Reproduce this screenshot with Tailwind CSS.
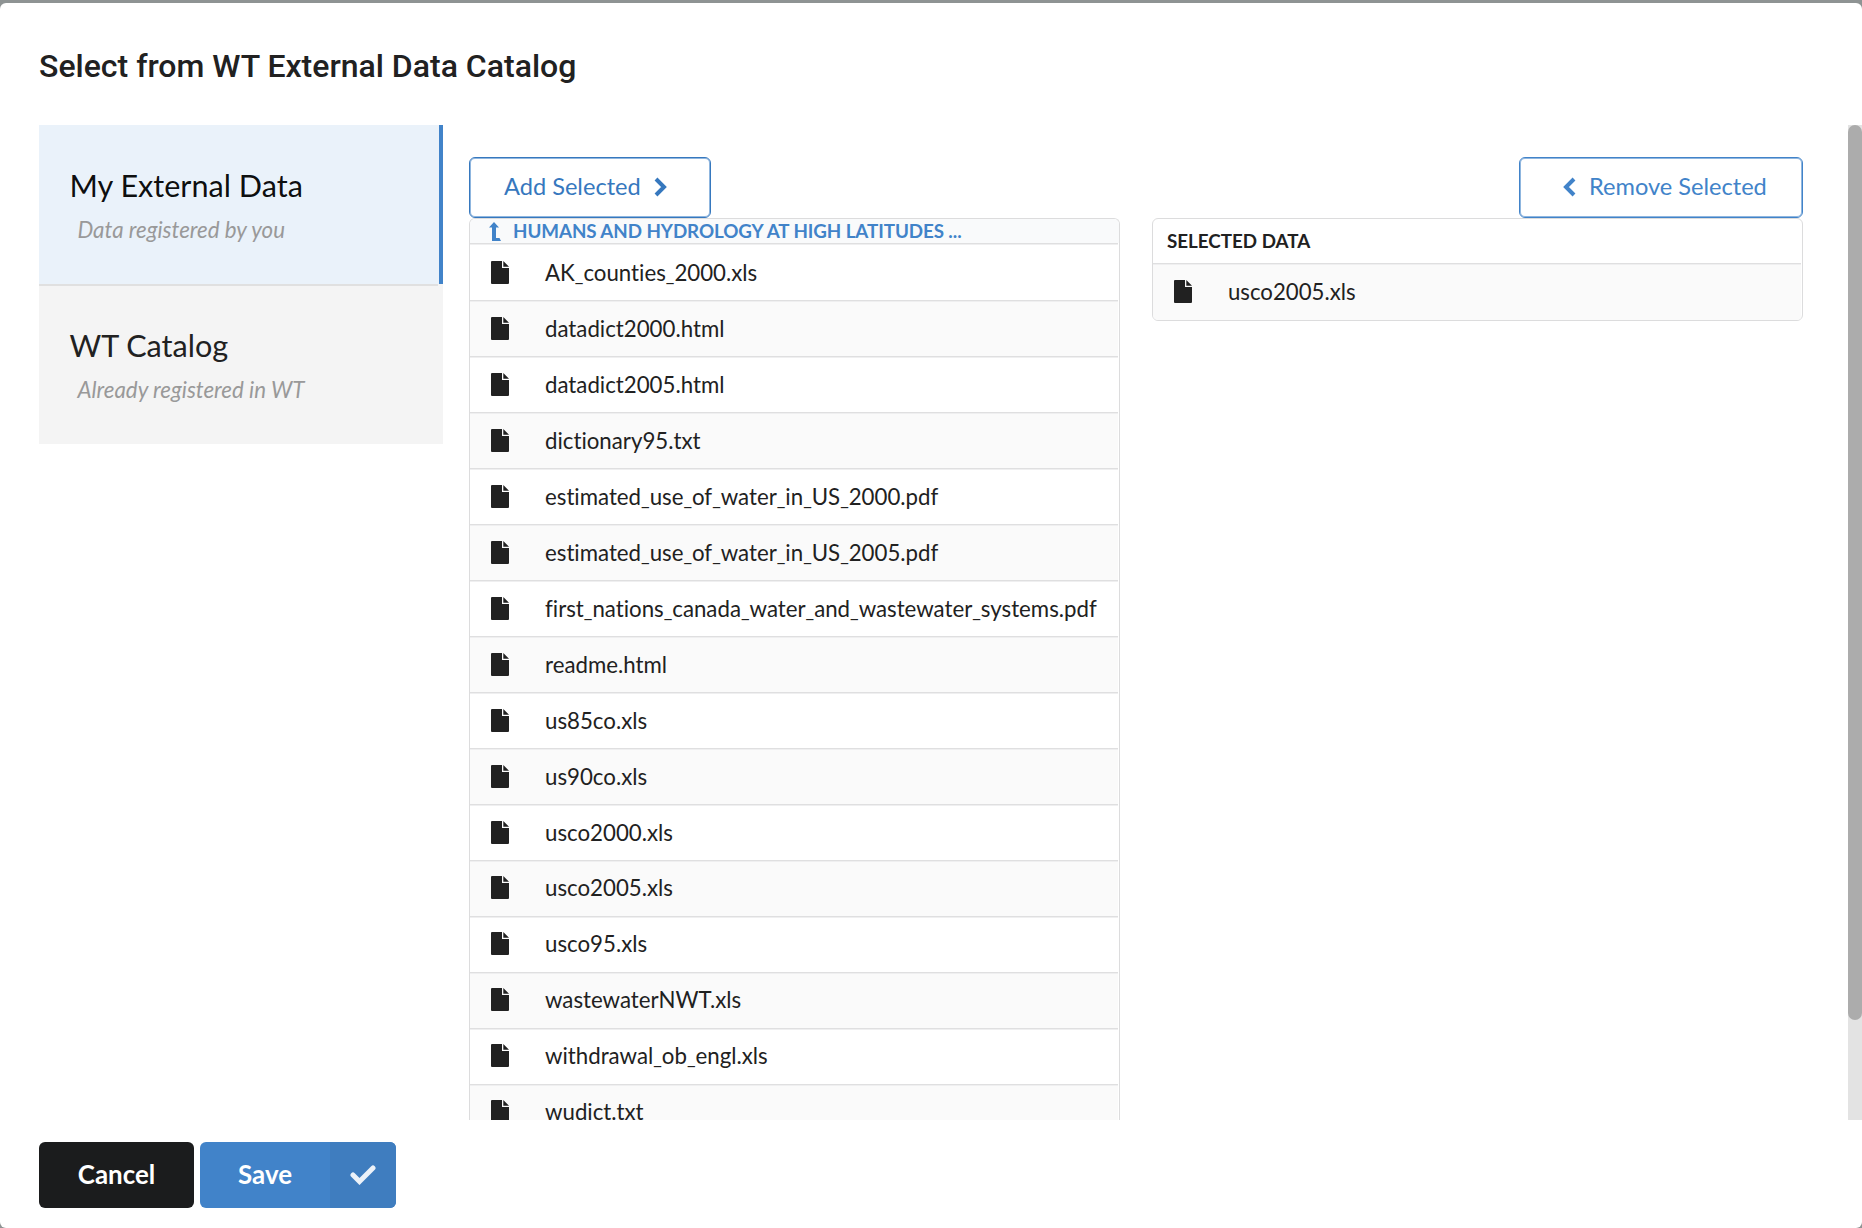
<!DOCTYPE html>
<html lang="en">
<head>
<meta charset="utf-8">
<title>Select from WT External Data Catalog</title>
<script src="https://cdn.jsdelivr.net/npm/@tailwindcss/browser@4"></script>
</head>
<body class="h-[1228px] w-[1862px] overflow-hidden bg-[#8e9393] pt-[3px] font-['Lato',sans-serif] text-[#212121] [font-variant-ligatures:none]">
<svg class="hidden">
  <symbol id="file" viewBox="0 0 18 23"><path fill="currentColor" d="M1 0h10v7h7v15a1 1 0 0 1-1 1H1a1 1 0 0 1-1-1V1a1 1 0 0 1 1-1zM12.3 0 18 5.700H12.300z"/></symbol>
</svg>
<div class="flex h-[1225px] flex-col rounded-[6px] bg-white">
  <header class="flex h-[122px] shrink-0 items-center pt-[3px] pl-[39px]">
    <h1 class="whitespace-nowrap font-['Roboto',sans-serif] text-[32px] font-medium leading-none">Select from WT External Data Catalog</h1>
  </header>
  <main class="flex h-[995px] shrink-0 overflow-hidden pl-[39px]">
    <nav class="mr-[26px] w-[404px] shrink-0">
      <a class="flex h-[159px] flex-col border-r-4 border-[#4183c9] bg-[#eaf2fa] pt-[42px] pl-[30.500px]">
        <span class="text-[30.600px] leading-[38px] text-black/95">My External Data</span>
        <span class="mt-[8px] pl-[8px] text-[22.300px] italic leading-[34px] text-[#999]">Data registered by you</span>
      </a>
      <a class="flex h-[160px] flex-col bg-[#f4f4f4]">
        <span class="mr-[5px] h-[2px] bg-[#e0e0e0]"></span>
        <span class="mt-[41px] pl-[30.500px] text-[30.600px] leading-[38px]">WT Catalog</span>
        <span class="mt-[8px] pl-[38.500px] text-[22.300px] italic leading-[34px] text-[#999]">Already registered in WT</span>
      </a>
    </nav>
    <section class="flex w-[651px] shrink-0 flex-col items-start pt-[32px]">
      <button class="flex h-[61px] w-[242px] shrink-0 items-center rounded-[6px] border border-[#3678be] pl-[34px] pb-[2px] text-[23.600px] text-[#3678be] shadow-[inset_0_0_0_1px_#8fb6df]">Add Selected
        <svg class="ml-[13px] h-[20px] w-[13px]" viewBox="0 0 13 20"><path d="M2 2l8 8-8 8" fill="none" stroke="currentColor" stroke-width="4"/></svg>
      </button>
      <div class="w-full rounded-t-[6px] border border-b-0 border-[#dcdcdd]">
        <div class="flex h-[24px] items-center rounded-t-[5px] bg-[#f9fafb] pl-[19px] text-[18.800px] font-bold leading-none tracking-[-0.08px] text-[#4183c9]">
          <svg class="mr-[12px] h-[19px] w-[12px]" viewBox="0 0 12 19"><path d="M5 0l5 5.500H7V16H10.500L12 19H3V5.500H0z" fill="currentColor"/></svg>HUMANS AND HYDROLOGY AT HIGH LATITUDES ...
        </div>
        <div id="rows"></div>
      </div>
    </section>
    <section class="ml-[32px] flex w-[651px] shrink-0 flex-col items-end pt-[32px]">
      <button class="flex h-[61px] w-[284px] shrink-0 items-center rounded-[6px] border border-[#4183c9] pl-[43px] pb-[2px] text-[23.600px] text-[#4183c9] shadow-[inset_0_0_0_1px_#8fb6df]">
        <svg class="mr-[13px] h-[20px] w-[13px]" viewBox="0 0 13 20"><path d="M11 2l-8 8 8 8" fill="none" stroke="currentColor" stroke-width="4"/></svg>Remove Selected
      </button>
      <div class="w-full overflow-hidden rounded-[6px] border border-[#dcdcdd]">
        <div class="flex h-[44px] items-center pl-[14px] text-[18.800px] font-bold leading-none">SELECTED DATA</div>
        <div class="mr-px flex h-[57px] items-center border-t border-[#dfdfe0] bg-[#fafafa] pb-px pl-[21px] text-[22.200px] leading-none shadow-[inset_0_1px_0_#efeff0]">
          <svg class="mr-[36px] h-[23px] w-[18px]"><use href="#file"/></svg><span class="mt-[2px]">usco2005.xls</span>
        </div>
      </div>
    </section>
    <div class="ml-auto w-[14px] bg-[#e3e3e3]"><div class="h-[895px] rounded-full bg-[#acacac]"></div></div>
  </main>
  <footer class="flex items-start gap-[6px] pt-[22px] pl-[39px] text-[25.900px] font-bold leading-none text-white">
    <button class="flex h-[66px] w-[155px] items-center justify-center rounded-[6px] bg-[#1b1c1d]">Cancel</button>
    <button class="flex h-[66px] w-[196px] items-center overflow-hidden rounded-[6px] bg-[#4183c9]">
      <span class="flex w-[130px] justify-center">Save</span>
      <span class="flex h-full w-[66px] items-center justify-center bg-[#3f7dbf] text-[#ecf2f9]"><svg class="h-[20px] w-[26px]" viewBox="0 0 26 20"><path d="M3 10l6.500 6.500L23 3" fill="none" stroke="currentColor" stroke-width="5" stroke-linecap="round"/></svg></span>
    </button>
  </footer>
</div>
<script>
const files = ["AK_counties_2000.xls","datadict2000.html","datadict2005.html","dictionary95.txt","estimated_use_of_water_in_US_2000.pdf","estimated_use_of_water_in_US_2005.pdf","first_nations_canada_water_and_wastewater_systems.pdf","readme.html","us85co.xls","us90co.xls","usco2000.xls","usco2005.xls","usco95.xls","wastewaterNWT.xls","withdrawal_ob_engl.xls","wudict.txt"];
document.getElementById("rows").innerHTML = files.map((f, i) => `<div class="mr-px flex ${i ? "h-[56px]" : "h-[57px]"} items-center border-t border-[#dfdfe0] ${i % 2 ? "bg-[#fafafa]" : "bg-white"} ${i > 10 ? "pb-[2px]" : i ? "pb-px" : "pt-px"} pl-[21px] text-[22.250px] leading-none shadow-[inset_0_1px_0_#efeff0]"><svg class="mr-[36px] h-[23px] w-[18px]"><use href="#file"/></svg><span class="mt-[2px]">${f.replaceAll("_", '<span class="text-[18.700px]">_</span>')}</span></div>`).join("");
</script>
</body>
</html>
